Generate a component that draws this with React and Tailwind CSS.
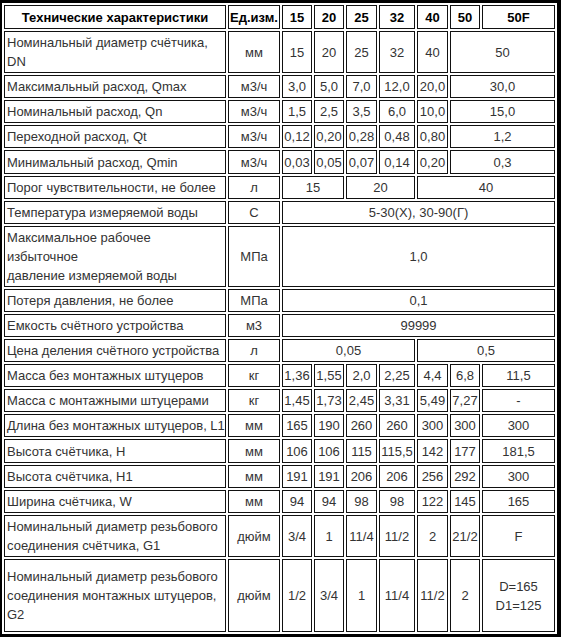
import React from 'react';

const HEAD = ['15', '20', '25', '32', '40', '50', '50F'];

// each value: string or [text, colSpan]
const ROWS = [
  { name: ['Номинальный диаметр счётчика,', 'DN'], unit: 'мм', vals: ['15', '20', '25', '32', '40', ['50', 2]], h: 'h-[41px]' },
  { name: ['Максимальный расход, Qmax'], unit: 'м3/ч', vals: ['3,0', '5,0', '7,0', '12,0', '20,0', ['30,0', 2]] },
  { name: ['Номинальный расход, Qn'], unit: 'м3/ч', vals: ['1,5', '2,5', '3,5', '6,0', '10,0', ['15,0', 2]] },
  { name: ['Переходной расход, Qt'], unit: 'м3/ч', vals: ['0,12', '0,20', '0,28', '0,48', '0,80', ['1,2', 2]] },
  { name: ['Минимальный расход, Qmin'], unit: 'м3/ч', vals: ['0,03', '0,05', '0,07', '0,14', '0,20', ['0,3', 2]], h: 'h-[24px]' },
  { name: ['Порог чувствительности, не более'], unit: 'л', vals: [['15', 2], ['20', 2], ['40', 3]] },
  { name: ['Температура измеряемой воды'], unit: 'С', vals: [['5-30(Х), 30-90(Г)', 7]] },
  { name: ['Максимальное рабочее', 'избыточное', 'давление измеряемой воды'], unit: 'МПа', vals: [['1,0', 7]], h: 'h-[60px]' },
  { name: ['Потеря давления, не более'], unit: 'МПа', vals: [['0,1', 7]] },
  { name: ['Емкость счётного устройства'], unit: 'м3', vals: [['99999', 7]] },
  { name: ['Цена деления счётного устройства'], unit: 'л', vals: [['0,05', 4], ['0,5', 3]] },
  { name: ['Масса без монтажных штуцеров'], unit: 'кг', vals: ['1,36', '1,55', '2,0', '2,25', '4,4', '6,8', '11,5'] },
  { name: ['Масса с монтажными штуцерами'], unit: 'кг', vals: ['1,45', '1,73', '2,45', '3,31', '5,49', '7,27', '-'] },
  { name: ['Длина без монтажных штуцеров, L1'], unit: 'мм', vals: ['165', '190', '260', '260', '300', '300', '300'] },
  { name: ['Высота счётчика, H'], unit: 'мм', vals: ['106', '106', '115', '115,5', '142', '177', '181,5'], h: 'h-[24px]' },
  { name: ['Высота счётчика, H1'], unit: 'мм', vals: ['191', '191', '206', '206', '256', '292', '300'], h: 'h-[22px]' },
  { name: ['Ширина счётчика, W'], unit: 'мм', vals: ['94', '94', '98', '98', '122', '145', '165'] },
  { name: ['Номинальный диаметр резьбового', 'соединения счётчика, G1'], unit: 'дюйм', vals: ['3/4', '1', '11/4', '11/2', '2', '21/2', 'F'], h: 'h-[42px]' },
  { name: ['Номинальный диаметр резьбового', 'соединения монтажных штуцеров,', 'G2'], unit: 'дюйм', vals: ['1/2', '3/4', '1', '11/4', '11/2', '2', 'D=165\nD1=125'], h: 'h-[73px]' },
];

const cell = 'border border-[#111] px-[1px] py-[1px] align-middle';

export default function App() {
  return (
    <div className="bg-white w-[564px] h-[638px] overflow-hidden" style={{ fontFamily: '"Liberation Sans", Arial, sans-serif' }}>
      <table className="table-fixed border-separate border-spacing-[2px] w-[561px] border-t-[3px] border-l-2 border-r-[4px] border-b-[3px] border-black text-[13px] leading-[19px] text-[#333]">
        <colgroup>
          <col className="w-[222px]" />
          <col className="w-[52px]" />
          <col className="w-[30px]" />
          <col className="w-[30px]" />
          <col className="w-[31px]" />
          <col className="w-[36px]" />
          <col className="w-[31px]" />
          <col className="w-[30px]" />
          <col />
        </colgroup>
        <thead>
          <tr className="h-[24px]">
            <th className={`${cell} text-center font-bold text-black`}>Технические характеристики</th>
            <th className={`${cell} text-center font-bold text-black whitespace-nowrap`}>Ед.изм.</th>
            {HEAD.map((h) => (
              <th key={h} className={`${cell} text-center font-bold text-black`}>{h}</th>
            ))}
          </tr>
        </thead>
        <tbody>
          {ROWS.map((r, i) => (
            <tr key={i} className={r.h || 'h-[23px]'}>
              <td className={`${cell} text-left pl-[2px] whitespace-nowrap`}>
                {r.name.map((l, j) => (
                  <div key={j}>{l}</div>
                ))}
              </td>
              <td className={`${cell} text-center`}>{r.unit}</td>
              {r.vals.map((v, j) => {
                const [t, span] = Array.isArray(v) ? v : [v, 1];
                return (
                  <td key={j} colSpan={span} className={`${cell} text-center whitespace-pre-line`}>{t}</td>
                );
              })}
            </tr>
          ))}
        </tbody>
      </table>
    </div>
  );
}
